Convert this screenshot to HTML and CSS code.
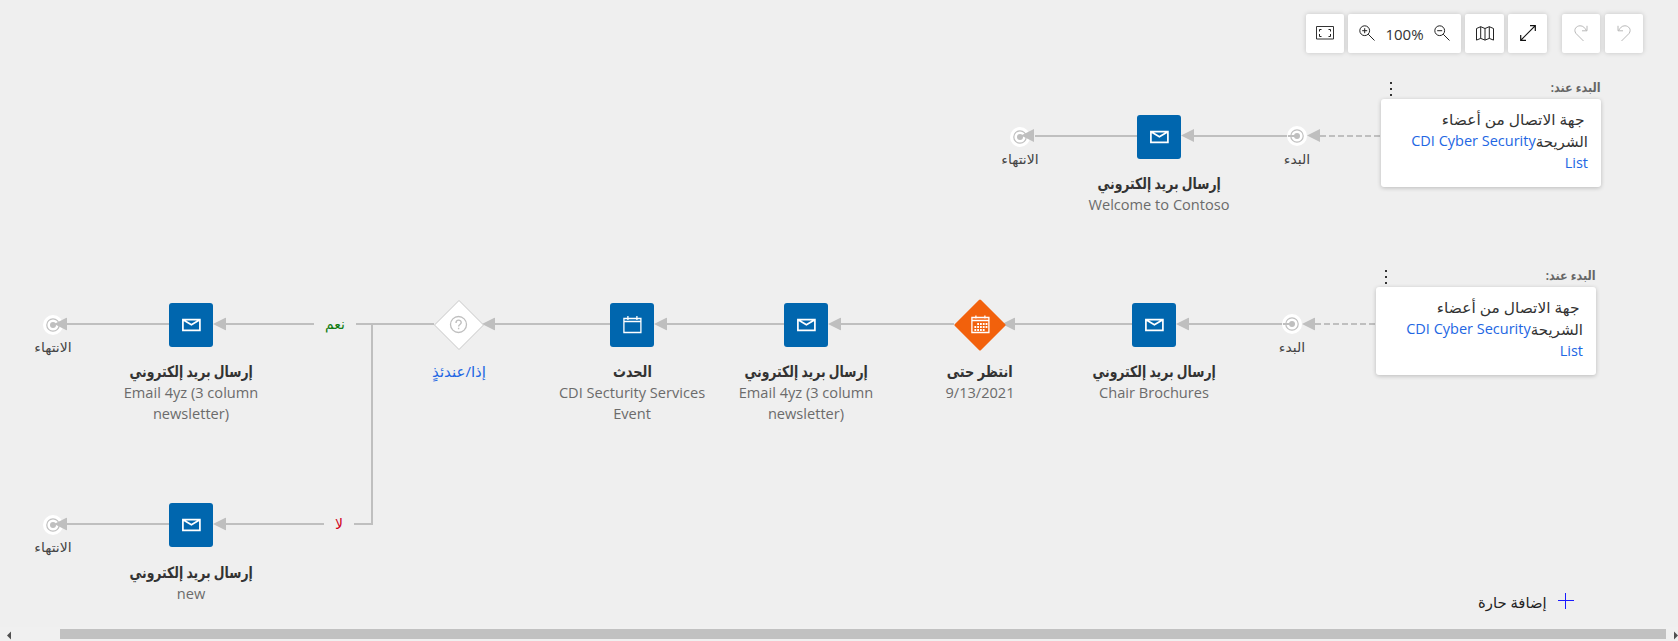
FILE: index.html
```html
<!DOCTYPE html>
<html lang="ar">
<head>
<meta charset="utf-8">
<title>Journey</title>
<link rel="stylesheet" href="styles.css">
</head>
<body>
<svg class="defs" aria-hidden="true">
  <symbol id="mail" viewBox="0 0 20 14"><path d="M1.9 1.700h17v10.600h-17zM2.400 2l8 4.800L18.400 2" fill="none" stroke="#fff" stroke-width="1.7"/></symbol>
  <symbol id="cal" viewBox="0 0 20 18"><path d="M1.900 2.500h17v14h-17zM1.400 5.500h18M5.900 0v4M14.900 0v4" fill="none" stroke="#fff" stroke-width="1.3"/></symbol>
  <symbol id="ring" viewBox="0 0 20 20"><circle cx="10" cy="10" r="10" fill="#fff"/><circle cx="10" cy="10" r="6.200" fill="none" stroke="#bfbfbf" stroke-width="1.200"/><circle cx="10" cy="10" r="3" fill="#bfbfbf"/></symbol>
  <symbol id="head" viewBox="0 0 13 13"><path d="M0 6.500L13 0v13z" fill="#bfbfbf"/></symbol>
</svg>
<main class="canvas">
  <svg class="links" width="1678" height="627">
    <g fill="none" stroke="#bfbfbf" stroke-width="2">
      <path d="M1035 136H1137M1194 136H1297"/>
      <path d="M67 324H169M226 324H314M356 324H434M494 324H610M667 324H784M841 324H954M1015 324H1132M1189 324H1292"/>
      <path d="M67 524H169M226 524H324M354 524H372V324"/>
      <path d="M1320 136H1380M1315 324H1375" stroke-dasharray="6 3"/>
    </g>
  </svg>

  <svg class="ring e1"><use href="#ring"/></svg><svg class="ring e2"><use href="#ring"/></svg><svg class="ring e3"><use href="#ring"/></svg>
  <svg class="ring s1"><use href="#ring"/></svg><svg class="ring s2"><use href="#ring"/></svg>
  <svg class="links" width="1678" height="627">
    <path d="M1288 136h9M1292 324h9" stroke="none"/>
    <g>
      <use href="#head" x="1021" y="129" width="13" height="13"/><use href="#head" x="1181" y="129" width="13" height="13"/><use href="#head" x="1307" y="129" width="13" height="13"/>
      <use href="#head" x="54" y="317.500" width="13" height="13"/><use href="#head" x="213" y="317.500" width="13" height="13"/><use href="#head" x="482" y="317.500" width="13" height="13"/><use href="#head" x="654" y="317.500" width="13" height="13"/><use href="#head" x="828" y="317.500" width="13" height="13"/><use href="#head" x="1002" y="317.500" width="13" height="13"/><use href="#head" x="1176" y="317.500" width="13" height="13"/><use href="#head" x="1302" y="317.500" width="13" height="13"/>
      <use href="#head" x="54" y="517.500" width="13" height="13"/><use href="#head" x="213" y="517.500" width="13" height="13"/>
      <path d="M1288 136h9M1283 324h9" stroke="#bfbfbf" stroke-width="2"/>
    </g>
  </svg>
  <span class="cap e1" dir="rtl">الانتهاء</span><span class="cap e2" dir="rtl">الانتهاء</span><span class="cap e3" dir="rtl">الانتهاء</span>
  <span class="cap s1" dir="rtl">البدء</span><span class="cap s2" dir="rtl">البدء</span>

  <section class="node n1"><div class="tile"><svg width="20" height="14"><use href="#mail"/></svg></div><h3 dir="rtl">إرسال بريد إلكتروني</h3><p>Welcome to Contoso</p></section>
  <section class="node n2"><div class="tile"><svg width="20" height="14"><use href="#mail"/></svg></div><h3 dir="rtl">إرسال بريد إلكتروني</h3><p>Chair Brochures</p></section>
  <section class="node n3">
    <div class="tile diamond"><svg width="52" height="52" viewBox="0 0 52 52"><path d="M26 2L50 26L26 50L2 26z" fill="#f2610c" stroke="#f2610c" stroke-width="3" stroke-linejoin="round"/><path d="M17.900 18.500h17v15h-17zM17.400 21.500h18M21.900 16.500v3M30.900 16.500v3" fill="none" stroke="#fff" stroke-width="1.300"/><path d="M23.200 25h1.800M26 25h1.800M28.800 25h1.800M31.600 25h1.800M20.400 28h1.800M23.200 28h1.800M26 28h1.800M28.800 28h1.800M31.600 28h1.800M20.400 31h1.800M23.200 31h1.800M26 31h1.800M28.800 31h1.800" stroke="#fff" stroke-width="2"/></svg></div>
    <h3 class="wait" dir="rtl">انتظر حتى</h3><p class="date">9/13/2021</p></section>
  <section class="node n4"><div class="tile"><svg width="20" height="14"><use href="#mail"/></svg></div><h3 dir="rtl">إرسال بريد إلكتروني</h3><p>Email 4yz (3 column<br>newsletter)</p></section>
  <section class="node n5"><div class="tile"><svg width="20" height="18"><use href="#cal"/></svg></div><h3 class="event" dir="rtl">الحدث</h3><p>CDI Secturity Services<br>Event</p></section>
  <section class="node n6">
    <div class="tile diamond"><svg width="52" height="52" viewBox="0 0 52 52"><path d="M26 1.500L50.500 26L26 50.500L1.500 26z" fill="#fff" stroke="#c8c8c8" stroke-linejoin="round"/><circle cx="25.500" cy="25.500" r="8" fill="none" stroke="#bfbfbf" stroke-width="1.300"/><path d="M23 24c0-3.800 5.200-3.600 5.200-.6 0 2.100-2.600 2-2.600 4.200M25.600 28.800v1.500" fill="none" stroke="#bfbfbf" stroke-width="1.400"/></svg></div>
    <a class="cond" dir="rtl">إذا/عندئذٍ</a></section>
  <section class="node n7"><div class="tile"><svg width="20" height="14"><use href="#mail"/></svg></div><h3 dir="rtl">إرسال بريد إلكتروني</h3><p>Email 4yz (3 column<br>newsletter)</p></section>
  <section class="node n8"><div class="tile"><svg width="20" height="14"><use href="#mail"/></svg></div><h3 dir="rtl">إرسال بريد إلكتروني</h3><p>new</p></section>
  <span class="branch yes" dir="rtl">نعم</span><span class="branch no" dir="rtl">لا</span>

  <section class="audience a1">
    <header><svg width="4" height="14"><path d="M1 0h2v2H1zM1 6h2v2H1zM1 12h2v2H1z" fill="#333"/></svg><b dir="rtl">البدء عند:</b></header>
    <div class="card"><div class="l1"><span class="who" dir="rtl">جهة الاتصال من أعضاء</span></div><div><a>CDI Cyber Security</a><span class="seg" dir="rtl">الشريحة</span></div><div><a>List</a></div></div>
  </section>
  <section class="audience a2">
    <header><svg width="4" height="14"><path d="M1 0h2v2H1zM1 6h2v2H1zM1 12h2v2H1z" fill="#333"/></svg><b dir="rtl">البدء عند:</b></header>
    <div class="card"><div class="l1"><span class="who" dir="rtl">جهة الاتصال من أعضاء</span></div><div><a>CDI Cyber Security</a><span class="seg" dir="rtl">الشريحة</span></div><div><a>List</a></div></div>
  </section>

  <nav class="toolbar">
    <button class="b1"><svg width="18" height="14"><path d="M.5.500h17v12.500H.5z" fill="none" stroke="#333"/><path d="M3.500 5.500V3.500h2M12.500 3.500h2v2M14.500 8v2.500h-2M5.500 10.500h-2V8" fill="none" stroke="#222"/></svg></button>
    <div class="zoom"><svg width="16" height="16"><circle cx="5.700" cy="5.700" r="4.900" fill="none" stroke="#222"/><path d="M9.200 9.200l6.300 6.300M3.200 5.700h5M5.700 3.200v5" fill="none" stroke="#222"/></svg><span>100%</span><svg width="16" height="16"><circle cx="5.700" cy="5.700" r="4.900" fill="none" stroke="#222"/><path d="M9.200 9.200l6.300 6.300M3.200 5.700h5" fill="none" stroke="#222"/></svg></div>
    <button class="b3"><svg width="18" height="15"><path d="M.5 2.500L4.700.700 9 2.500 13.300.700l4.200 1.800v11.600l-4.200-1.700L9 14.100l-4.300-1.700L.5 14.100zM4.700.700v11.700M9 2.500v11.600M13.300.700v11.700" fill="none" stroke="#222"/></svg></button>
    <button class="b3"><svg width="16" height="16"><path d="M.7 15.300L15.300.700M10 .700h5.300v5.300M.7 10v5.300h5.300" fill="none" stroke="#111" stroke-width="1.200"/></svg></button>
    <button class="b1 redo"><svg width="14" height="17"><path d="M9.500 16L2 8.500C-1 4.500 2.500.800 6 .8c3.500 0 4.500 2 6.500 4.700M13 .8v5H8" fill="none" stroke="#b8b8b8"/></svg></button>
    <button class="b1 undo"><svg width="14" height="17"><path d="M4.500 16L12 8.500C15 4.500 11.500.800 8 .8c-3.500 0-4.500 2-6.500 4.700M1 .8v5h5" fill="none" stroke="#b8b8b8"/></svg></button>
  </nav>
  <div class="add"><span dir="rtl">إضافة حارة</span><svg width="16" height="16"><path d="M0 7.500h16M7.500 0v16" stroke="#1a1aff" stroke-width="1"/></svg></div>
</main>
<footer class="scroll"><svg width="12" height="14"><path d="M7 8.500l4-4v8z" fill="#505050"/></svg><div class="thumb"></div><svg width="12" height="14"><path d="M12 8.500L8 4.500v8z" fill="#505050"/></svg></footer>
</body>
</html>
```
FILE: styles.css
```css
* { box-sizing: border-box; }
body { margin: 0; height: 641px; overflow: hidden; display: flex; flex-direction: column; background: #efefef; font-family: "Open Sans", "DejaVu Sans", sans-serif; color: #333; }
.defs { position: absolute; width: 0; height: 0; }
.canvas { position: relative; height: 627px; flex: none; }
.links { position: absolute; left: 0; top: 0; }

.ring { position: absolute; width: 20px; height: 20px; }
.ring.e1 { left: 1010px; top: 127px; }
.ring.e2 { left: 43px; top: 315px; }
.ring.e3 { left: 43px; top: 515px; }
.ring.s1 { left: 1287px; top: 126px; }
.ring.s2 { left: 1282px; top: 314px; }

.cap { position: absolute; width: 80px; text-align: center; font-size: 13px; line-height: 20px; color: #444; transform: scaleX(1.08); }
.cap.e1 { left: 980px; top: 149px; }
.cap.e2 { left: 13px; top: 337px; }
.cap.e3 { left: 13px; top: 537px; }
.cap.s1 { left: 1257px; top: 149px; }
.cap.s2 { left: 1252px; top: 337px; }

.node { position: absolute; width: 180px; display: flex; flex-direction: column; align-items: center; }
.n1 { left: 1069px; top: 115px; }
.n2 { left: 1064px; top: 303px; }
.n3 { left: 890px; top: 303px; }
.n4 { left: 716px; top: 303px; }
.n5 { left: 542px; top: 303px; }
.n6 { left: 369px; top: 303px; }
.n7 { left: 101px; top: 303px; }
.n8 { left: 101px; top: 503px; }
.tile { width: 44px; height: 44px; border-radius: 3px; background: #0066ae; display: flex; align-items: center; justify-content: center; }
.diamond { background: none; }
.diamond svg { flex: none; }
.node h3 { margin: 14px 0 0; font-size: 15.5px; line-height: 21px; font-weight: 700; white-space: nowrap; transform: scaleX(.8); }
.node .event, .node .wait { transform: scaleX(.83); }
.node.n8 h3 { margin-top: 15px; }
.node p { margin: 0; font-size: 14.6px; line-height: 21px; color: #6b6b6b; text-align: center; white-space: nowrap; }
.cond { margin-top: 14px; font-size: 15px; line-height: 21px; color: #2266e3; }
.branch { position: absolute; width: 42px; text-align: center; font-size: 14px; line-height: 20px; }
.yes { left: 314px; top: 314px; color: #107c10; }
.no { left: 318px; top: 514px; color: #d0021b; }

.audience { position: absolute; width: 220px; }
.a1 { left: 1381px; top: 76px; }
.a2 { left: 1376px; top: 264px; }
.audience header { height: 23px; display: flex; justify-content: space-between; padding-left: 8px; }
.audience header svg { margin-top: 6px; }
.audience header b { font-size: 13px; line-height: 22px; color: #666; transform: scaleX(.865); transform-origin: right; }
.card { height: 88px; padding: 9px 13px 0 0; background: #fff; border-radius: 3px; box-shadow: 0 1px 4px rgba(0,0,0,.22); }
.card div { display: flex; justify-content: flex-end; font-size: 14.5px; line-height: 22px; height: 22px; white-space: nowrap; }
.card .l1 { padding-right: 4px; }
.who { font-size: 15px; transform: scaleX(1.03); transform-origin: right; }
.seg { font-size: 15px; }
.card a { color: #2266e3; }

.toolbar { position: absolute; left: 1306px; top: 14px; height: 39px; display: flex; gap: 4px; }
.toolbar button, .zoom { height: 39px; padding: 0; border: 0; border-radius: 2px; background: #fff; box-shadow: 0 0 5px rgba(0,0,0,.18); display: flex; align-items: center; justify-content: center; }
.toolbar svg { margin-bottom: 1px; }
.b1 { width: 38px; }
.b3 { width: 39px; }
.zoom { width: 113px; gap: 10.5px; font-size: 15px; }
.redo { margin-left: 11px; }
.undo { margin-left: 1px; }
.add { position: absolute; left: 1478px; top: 591px; display: flex; align-items: center; gap: 11px; font-size: 14.8px; line-height: 22px; color: #222; }
.add svg { margin-bottom: 2px; }

.scroll { height: 14px; display: flex; background: #f0f0f0; }
.thumb { flex: 1; margin: 2px 0 2px 48px; background: #c1c1c1; }
```
